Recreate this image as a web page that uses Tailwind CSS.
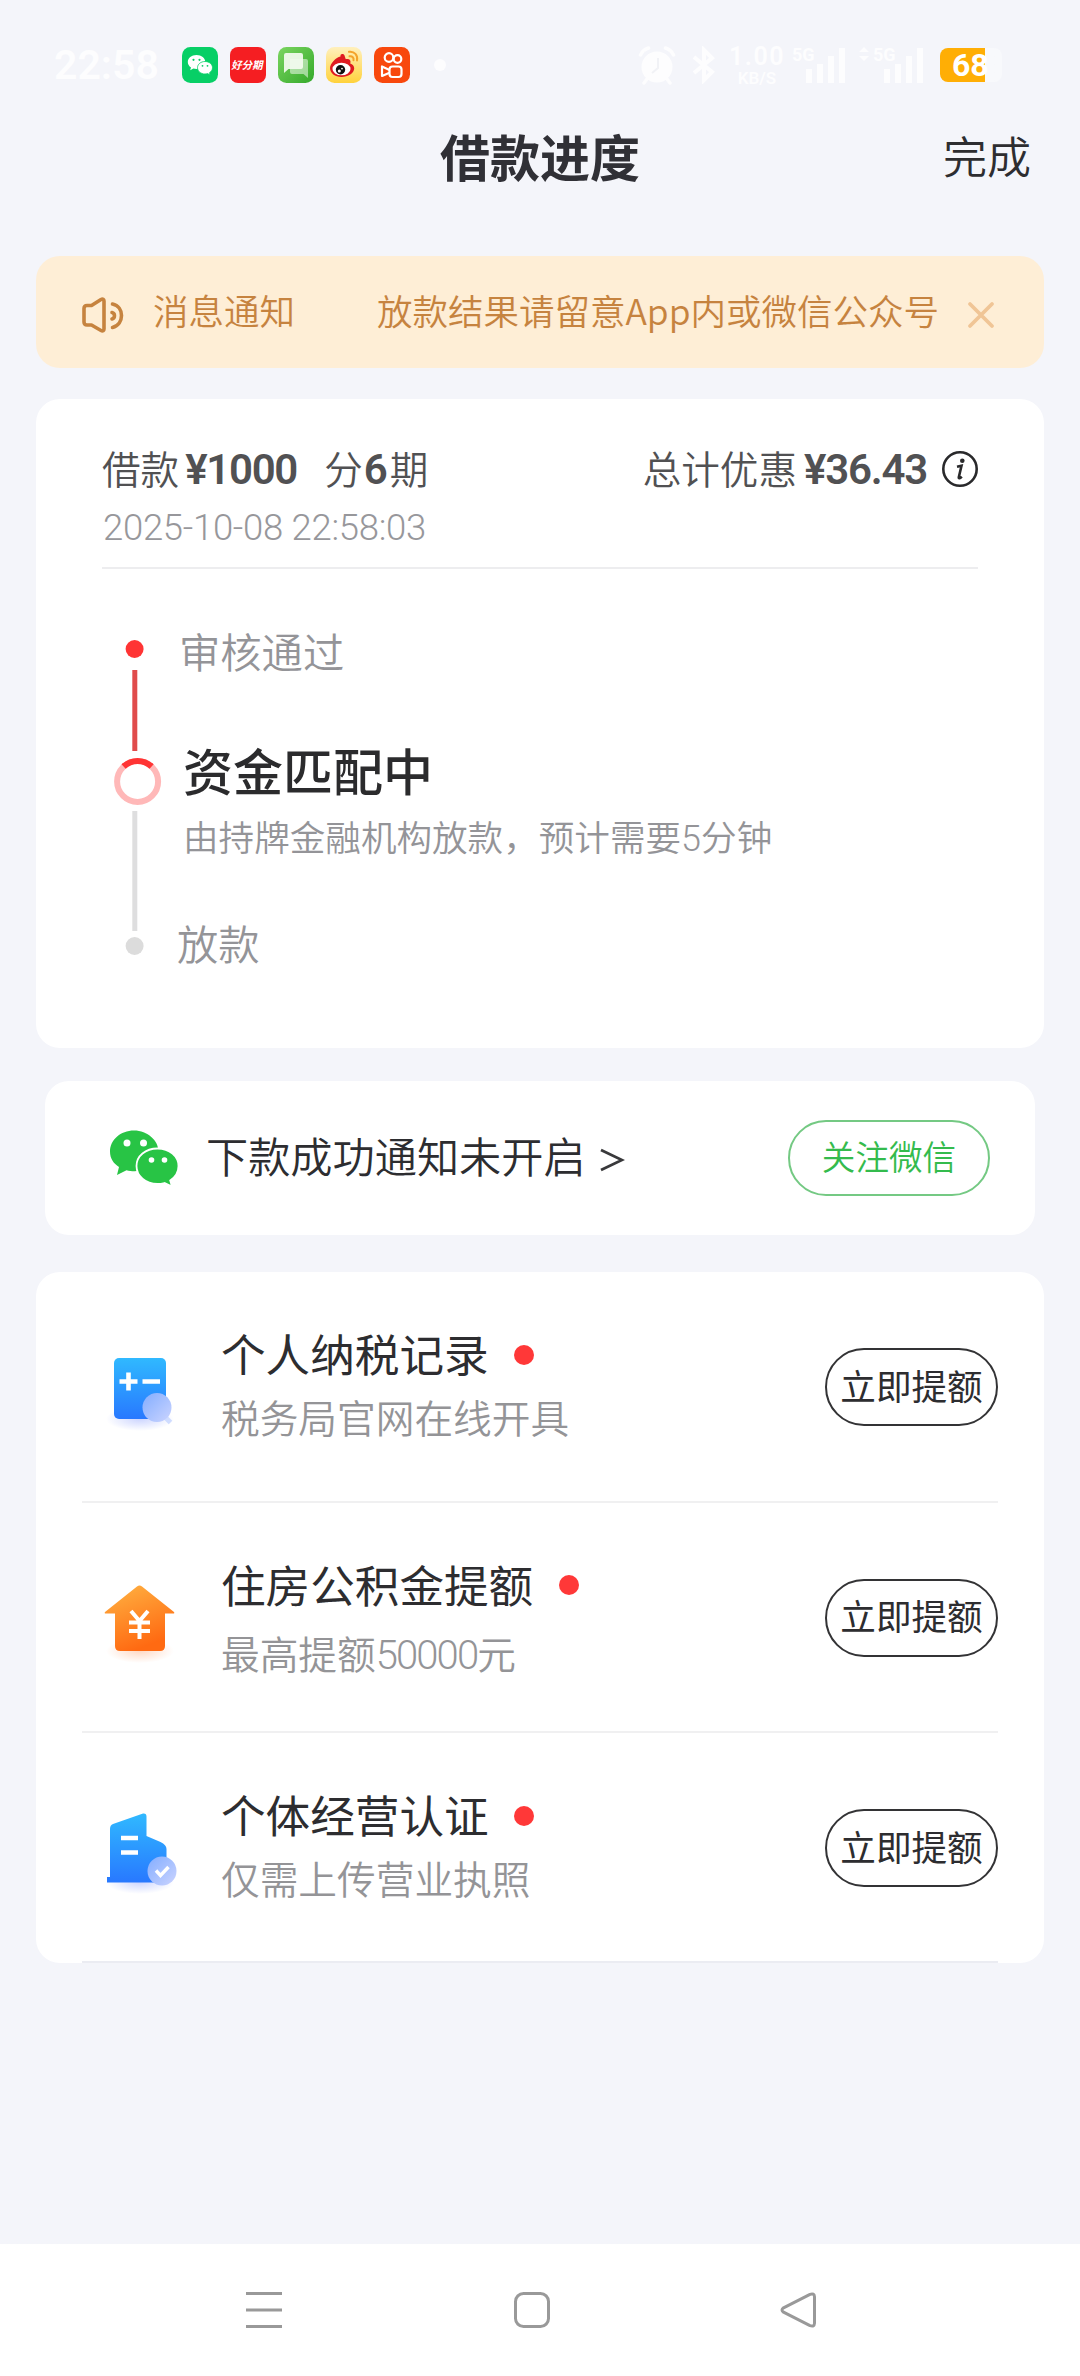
<!DOCTYPE html>
<html lang="zh-CN">
<head>
<meta charset="utf-8">
<title>借款进度</title>
<script src="https://cdn.jsdelivr.net/npm/@tailwindcss/browser@4"></script>
</head>
<body class="w-[1080px] h-[2376px] flex flex-col overflow-hidden bg-[#f4f5fa] text-[#2d2d30] whitespace-nowrap font-['Noto_Sans_CJK_SC','Noto_Sans_CJK_JP',sans-serif]">

<!-- status bar -->
<header class="h-[130px] shrink-0 flex items-center text-[#fdfdfe] font-['Roboto',sans-serif]">
  <span class="ml-[54px] w-[128px] text-[41px] leading-none font-semibold">22:58</span>
  <div class="flex gap-3">
    <svg class="size-9" viewBox="0 0 36 36"><rect width="36" height="36" rx="8.500" fill="#07cf66"/><g fill="#fff"><path d="M14.500 8C9.500 8 5.800 11 5.800 15c0 2.300 1.200 4.200 3.200 5.500l-.8 2.700 3.200-1.600c1 .3 2 .4 3.100.4 5 0 8.800-3 8.800-7s-3.800-7-8.800-7z"/><path stroke="#07cf66" stroke-width=".8" d="M23 14.500c-4.300 0-7.500 2.800-7.500 6.200s3.200 6.300 7.500 6.300c.9 0 1.800-.1 2.600-.4l2.600 1.400-.7-2.300c1.800-1.200 3-2.900 3-5 0-3.400-3.200-6.200-7.500-6.200z"/></g><g fill="#07cf66"><circle cx="11.500" cy="12.800" r="1.100"/><circle cx="17.500" cy="12.800" r="1.100"/><circle cx="20.500" cy="18.800" r=".9"/><circle cx="25.500" cy="18.800" r=".9"/></g></svg>
    <div class="size-9 rounded-[8px] bg-[#f51e22] flex items-center justify-center text-white"><span class="font-['Noto_Sans_CJK_SC',sans-serif] text-[10.500px] leading-none font-bold -skew-x-12">好分期</span></div>
    <svg class="size-9" viewBox="0 0 36 36"><defs><linearGradient id="sms" x1="0" y1="0" x2="1" y2="1"><stop stop-color="#7bd560"/><stop offset="1" stop-color="#34a92b"/></linearGradient></defs><rect width="36" height="36" rx="8.500" fill="url(#sms)"/><path d="M12 12h16a2 2 0 0 1 2 2v17l-4.500-4H14a2 2 0 0 1-2-2z" fill="#fff" opacity=".5"/><path d="M8 6h15a2 2 0 0 1 2 2v12a2 2 0 0 1-2 2H10.500L6 26V8a2 2 0 0 1 2-2z" fill="#f3fbef" opacity=".93"/></svg>
    <svg class="size-9" viewBox="0 0 36 36"><defs><linearGradient id="wb" x2="0" y2="1"><stop stop-color="#fff0bd"/><stop offset="1" stop-color="#ffd23c"/></linearGradient></defs><rect width="36" height="36" rx="8.500" fill="url(#wb)"/><path d="M4 21c0-4 6-11 10.500-11.500 2.500-.2 3 2 2.500 3.500 2-.8 5.500-1.600 7 .2.800 1 .5 2.300.2 3.300 2.300.8 4 2.500 4 4.700C28.200 26 22 30 15.500 30S4 26 4 21z" fill="#df1a20"/><path d="M14.500 9.500c-.5-3 3-3 4-1l1.500 4.500h-4z" fill="#df1a20"/><ellipse cx="15.500" cy="22" rx="9" ry="6.300" fill="#fff"/><circle cx="14.500" cy="22.800" r="4.700" fill="#111"/><circle cx="13.300" cy="24" r="1.500" fill="#fff"/><circle cx="16" cy="21.600" r=".9" fill="#fff"/><path d="M23 4.800c5.500-.8 9 3.400 8 8.700M23.500 9.300c3-.4 4.500 1.500 4 4" fill="none" stroke="#f4a32b" stroke-width="2" stroke-linecap="round"/></svg>
    <svg class="size-9" viewBox="0 0 36 36"><rect width="36" height="36" rx="8.500" fill="#f8480d"/><g fill="none" stroke="#fff" stroke-width="2.200" stroke-linejoin="round"><circle cx="15" cy="10.500" r="4.300"/><circle cx="23.500" cy="12" r="3.800"/><rect x="15.500" y="19.500" width="12" height="10.500" rx="3"/><path d="m15.500 23-7.500-3.500v9.500l7.500-3.200"/></g></svg>
  </div>
  <span class="ml-6 size-3 rounded-full bg-[#fdfdfe]"></span>
  <svg class="ml-[192px] w-[38px] h-[40px]" viewBox="0 0 38 40"><circle cx="19" cy="22" r="15.500" fill="#fdfdfe"/><path d="M2.500 10C4 6.500 7 4 10.500 3M35.500 10C34 6.500 31 4 27.500 3M9 34l-3 4M29 34l3 4" stroke="#fdfdfe" stroke-width="3.500" stroke-linecap="round"/><path d="M20 13v10l-6 5" fill="none" stroke="#f1f2f6" stroke-width="2"/></svg>
  <svg class="ml-[16px] w-[24px] h-[38px]" viewBox="0 0 24 38" fill="none" stroke="#fdfdfe" stroke-width="4"><path d="M2 11l18 15-8 8V4l8 8L2 27"/></svg>
  <div class="ml-3 w-[58px] flex flex-col items-center font-semibold"><span class="text-[25px] leading-[25px] tracking-[1.500px]">1.00</span><span class="text-[17px] leading-[18px]">KB/S</span></div>
  <div class="ml-[7px] relative w-[52px] h-[36px] flex items-end justify-end gap-[5px]"><span class="absolute -left-px top-0 text-[18px] leading-[15px] font-bold">5G</span><i class="w-[6px] h-[14px] bg-[#fdfdfe]"></i><i class="w-[6px] h-[19px] bg-[#fdfdfe]"></i><i class="w-[6px] h-[27px] bg-[#fdfdfe]"></i><i class="w-[6px] h-[35px] bg-[#fdfdfe]"></i></div>
  <div class="ml-[14px] relative w-[64px] h-[36px] flex items-end justify-end gap-[5px]"><svg class="absolute left-0 top-0 w-[10px] h-[14px]" viewBox="0 0 10 14" fill="#fdfdfe"><path d="M5 0l5 5H0zM5 14L0 9h10z"/></svg><span class="absolute left-[14px] top-0 text-[18px] leading-[15px] font-bold">5G</span><i class="w-[6px] h-[14px] bg-[#fdfdfe]"></i><i class="w-[6px] h-[19px] bg-[#fdfdfe]"></i><i class="w-[6px] h-[27px] bg-[#fdfdfe]"></i><i class="w-[6px] h-[35px] bg-[#fdfdfe]"></i></div>
  <div class="ml-[17px] w-[62px] h-[34px] rounded-[8px] overflow-hidden flex items-center bg-linear-to-r from-[#ffae05] from-[73%] to-[#f8f9fc] to-[73%]"><span class="pl-3 text-[32px] leading-none font-bold text-white">68</span></div>
</header>

<!-- title bar -->
<div class="h-[50px] shrink-0 grid grid-cols-3 items-center px-[49px]">
  <span></span>
  <h1 class="text-center text-[50px] leading-none font-bold text-[#303036]">借款进度</h1>
  <span class="text-right text-[44px] leading-none font-[350]">完成</span>
</div>

<!-- notice -->
<div class="mt-[76px] mx-[36px] h-[112px] shrink-0 rounded-3xl bg-[#feeed6] flex items-center text-[#c6833f] text-[35.500px] leading-none font-[350]">
  <svg class="ml-[45px] mt-[6px] w-[44px] h-[38px]" viewBox="0 0 44 38" fill="none" stroke="#c6833f" stroke-width="3.600" stroke-linecap="round" stroke-linejoin="round"><path d="M3 12.500c0-2 1-3 3-3h4.500L20 3.500c1.800-1 3 0 3 1.500v28c0 1.500-1.200 2.500-3 1.500l-9.500-5.500H6c-2 0-3-1-3-3z"/><path d="M31.500 8c12 2.500 12 20.500 0 23.500M31 16.500c3.300.8 3.300 5.500 0 6.500"/></svg>
  <span class="ml-[28px] w-[224px] -mt-[4px]">消息通知</span>
  <span class="-mt-[4px]">放款结果请留意App内或微信公众号</span>
  <svg class="ml-auto mr-[48px] mt-[6px] w-[30px] h-[30px]" viewBox="0 0 30 30" stroke="#f0c596" stroke-width="3.800" stroke-linecap="round"><path d="M4 4l22 22M26 4L4 26"/></svg>
</div>

<!-- progress card -->
<section class="mt-[31px] mx-[36px] h-[649px] shrink-0 rounded-3xl bg-white px-[66px]">
  <div class="h-[170px] border-b-2 border-[#ededef] pt-[46px]">
    <div class="h-[44px] flex items-center text-[38.600px] leading-none text-[#515153] font-[350]">
      <span>借款</span><b class="ml-[6px] w-[139px] pt-[6px] font-['Roboto',sans-serif] font-semibold text-[42px] tracking-[-1.300px]">¥1000</b><span>分</span><b class="w-[26px] pt-[6px] text-center font-['Roboto',sans-serif] font-semibold text-[42px]">6</b><span class="ml-px">期</span>
      <span class="ml-auto">总计优惠</span><b class="ml-[7px] pt-[6px] w-[138px] font-['Roboto',sans-serif] font-semibold text-[42px] tracking-[-1.200px]">¥36.43</b>
      <svg class="size-9 mt-[4px]" viewBox="0 0 36 36"><circle cx="18" cy="18" r="16.700" fill="none" stroke="#29292b" stroke-width="2.600"/><circle cx="20.300" cy="9.800" r="2.300" fill="#29292b"/><path d="M15 15.800l4.500-1-2.700 11.500c-.3 1.500 1 1.300 3-.7" fill="none" stroke="#29292b" stroke-width="2.600"/></svg>
    </div>
    <p class="mt-[19px] ml-px text-[36.500px] leading-[40px] text-[#97979b] font-light font-['Roboto',sans-serif] tracking-[-.3px]">2025-10-08 22:58:03</p>
  </div>
  <div class="flex">
    <svg class="ml-[6px] w-[56px] h-[460px]" viewBox="0 0 56 460"><circle cx="26.600" cy="80" r="9" fill="#ff3434"/><path d="M26.800 101v81" stroke="#e04b4b" stroke-width="5"/><circle cx="29.600" cy="212.500" r="20.500" fill="none" stroke="#ffb8b8" stroke-width="6"/><path d="M15.600 197.500a20.500 20.500 0 0 1 28 0" fill="none" stroke="#ff3434" stroke-width="6"/><path d="M26.800 242v120" stroke="#dededf" stroke-width="5"/><circle cx="26.600" cy="377" r="9" fill="#dcdcdc"/></svg>
    <div class="ml-[15px] text-[#949498] leading-none font-[350]">
      <p class="mt-[61px] text-[41.300px]">审核通过</p>
      <p class="mt-[73px] ml-[4px] text-[50px] text-[#2b2b2d] font-medium">资金匹配中</p>
      <p class="mt-[24px] ml-[4px] text-[35.600px]">由持牌金融机构放款，预计需要<span class="font-['Roboto',sans-serif] font-light text-[36px]">5</span>分钟</p>
      <p class="mt-[65px] -ml-[2px] text-[41.300px]">放款</p>
    </div>
  </div>
</section>

<!-- wechat notice -->
<section class="mt-[33px] mx-[45px] h-[154px] shrink-0 rounded-3xl bg-white flex items-center pl-[64px] pr-[45px]">
  <svg class="w-[70px] h-[56px]" viewBox="0 0 70 56"><path d="M25 .5C11.500.5 1 10 1 21.500c0 7 3.500 12 9 15.500l-2 8 9.500-4.800c2.600.8 5 1 8 1 13.500 0 24-8.700 24-19.700S38.500.5 25 .5z" fill="#28c445"/><path d="M48.500 18.500C36.500 18.500 27.500 26 27.500 36S36.500 54 48.500 54c2.500 0 4.800-.4 7-1l7.500 3.500-1.800-6c5-3.300 8.300-8.200 8.300-14.500 0-9.800-9-17.500-21-17.500z" fill="#28c445" stroke="#fff" stroke-width="1.800"/><g fill="#fff"><circle cx="18" cy="13" r="3.500"/><circle cx="34.500" cy="13" r="3.500"/><circle cx="42.500" cy="30" r="2.800"/><circle cx="55.500" cy="30" r="2.800"/></g></svg>
  <span class="ml-[27px] -mt-[5px] text-[42.200px] leading-none font-[350]">下款成功通知未开启</span>
  <svg class="ml-[13px] mt-[4px] w-[26px] h-[26px]" viewBox="0 0 26 26" fill="none" stroke="#39393b" stroke-width="2.800"><path d="M2 3l21 10L2 23"/></svg>
  <button class="ml-auto w-[202px] h-[76px] rounded-full border-2 border-[#74c983] text-[#34bb4d] text-[33.600px] leading-none font-[350] pb-[4px]">关注微信</button>
</section>

<!-- raise-limit tasks -->
<section class="mt-[37px] mx-[36px] h-[691px] shrink-0 rounded-3xl bg-white px-[46px]">
  <div class="h-[230.500px] border-b-2 border-[#f0f0f1] flex">
    <svg class="mt-[78px] ml-[16px] w-[84px] h-[90px]" viewBox="0 0 84 90"><defs><linearGradient id="blue" x2="0" y2="1"><stop stop-color="#30b9ff"/><stop offset="1" stop-color="#2878ff"/></linearGradient><radialGradient id="shade"><stop stop-color="#9aabff" stop-opacity=".5"/><stop offset="1" stop-color="#9aabff" stop-opacity="0"/></radialGradient><linearGradient id="lens" x2="1" y2="1"><stop stop-color="#83adff"/><stop offset="1" stop-color="#cbd4ff"/></linearGradient></defs><ellipse cx="42" cy="69" rx="34" ry="12" fill="url(#shade)"/><rect x="16" y="8" width="52" height="61" rx="5" fill="url(#blue)"/><path d="M21.500 31.500h18M30.500 22.500v18M44.500 31.500H62" stroke="#fff" stroke-width="4.600"/><path d="M66 66l6.500 6.500" stroke="#cfdcff" stroke-width="5"/><circle cx="59" cy="57.500" r="14.500" fill="url(#lens)"/></svg>
    <div class="ml-[39px] leading-none">
      <p class="mt-[59px] text-[44.600px] flex items-center font-normal">个人纳税记录<i class="ml-[25px] mt-[3px] size-5 rounded-full bg-[#ff3838]"></i></p>
      <p class="mt-[21px] text-[38.700px] text-[#949497] font-[350]">税务局官网在线开具</p>
    </div>
    <button class="ml-auto mt-[76px] w-[173px] h-[78px] rounded-full border-2 border-[#333335] text-[35.600px] leading-none font-normal pb-[5px]">立即提额</button>
  </div>
  <div class="h-[230.500px] border-b-2 border-[#f0f0f1] flex">
    <svg class="mt-[78px] ml-[16px] w-[84px] h-[90px]" viewBox="0 0 84 90"><defs><linearGradient id="orange" x2=".4" y2="1"><stop stop-color="#ffb443"/><stop offset="1" stop-color="#ff6a12"/></linearGradient><radialGradient id="warm"><stop stop-color="#ffb38a" stop-opacity=".5"/><stop offset="1" stop-color="#ffb38a" stop-opacity="0"/></radialGradient></defs><ellipse cx="42" cy="70" rx="34" ry="12" fill="url(#warm)"/><path d="M39 5.500q2.500-2 5 0l32 25.500q1 1.500-1 1.500h-8V65q0 5-5 5H22q-5 0-5-5V32.500H8q-2 0-1-1.500z" fill="url(#orange)"/><path d="M33 30l8.500 10L50 30M31 41.500h21M31 50h21M41.500 39v19" fill="none" stroke="#fff" stroke-width="4"/></svg>
    <div class="ml-[39px] leading-none">
      <p class="mt-[59px] text-[44.600px] flex items-center font-normal">住房公积金提额<i class="ml-[26px] mt-[3px] size-5 rounded-full bg-[#ff3838]"></i></p>
      <p class="mt-[27px] text-[38.700px] text-[#949497] font-[350]">最高提额<span class="font-['Roboto',sans-serif] font-light text-[40px] tracking-[-1.900px]">50000</span>元</p>
    </div>
    <button class="ml-auto mt-[76px] w-[173px] h-[78px] rounded-full border-2 border-[#333335] text-[35.600px] leading-none font-normal pb-[5px]">立即提额</button>
  </div>
  <div class="h-[230px] border-b-2 border-[#ebecf2] flex">
    <svg class="mt-[78px] ml-[16px] w-[84px] h-[90px]" viewBox="0 0 84 90"><ellipse cx="42" cy="71" rx="34" ry="12" fill="url(#shade)"/><path d="M9 66h3V18q0-4 3-5l30-10.500q3.500-.5 3.500 3V25l14 6q6 3 6 7v33.500H9z" fill="url(#blue)"/><path d="M23 27h17M23 41.500h17" stroke="#fff" stroke-width="4.600"/><circle cx="64" cy="60" r="14.500" fill="url(#lens)"/><path d="M58 59.500l4.500 5 8-8.500" fill="none" stroke="#fff" stroke-width="3.400"/></svg>
    <div class="ml-[39px] leading-none">
      <p class="mt-[59px] text-[44.600px] flex items-center font-normal">个体经营认证<i class="ml-[25px] mt-[3px] size-5 rounded-full bg-[#ff3838]"></i></p>
      <p class="mt-[21px] text-[38.700px] text-[#949497] font-[350]">仅需上传营业执照</p>
    </div>
    <button class="ml-auto mt-[76px] w-[173px] h-[78px] rounded-full border-2 border-[#333335] text-[35.600px] leading-none font-normal pb-[5px]">立即提额</button>
  </div>
</section>

<!-- system navigation -->
<nav class="mt-auto h-[132px] shrink-0 bg-white flex items-center pl-[244px]">
  <svg class="size-10" viewBox="0 0 40 40" stroke="#999" stroke-width="3"><path d="M2 3.500h36M2 20h36M2 36.500h36"/></svg>
  <svg class="ml-[228px] size-10" viewBox="0 0 40 40" fill="none" stroke="#999" stroke-width="3"><rect x="3.500" y="3.500" width="33" height="33" rx="8"/></svg>
  <svg class="ml-[228px] w-[38px] h-10" viewBox="0 0 38 40" fill="none" stroke="#999" stroke-width="3" stroke-linejoin="round"><path d="M30 4.300L3.500 17.800q-3 2.200 0 4.400L30 35.700q4.300 1.500 4.500-2.500V6.800q-.2-4-4.500-2.500z"/></svg>
</nav>
</body>
</html>
